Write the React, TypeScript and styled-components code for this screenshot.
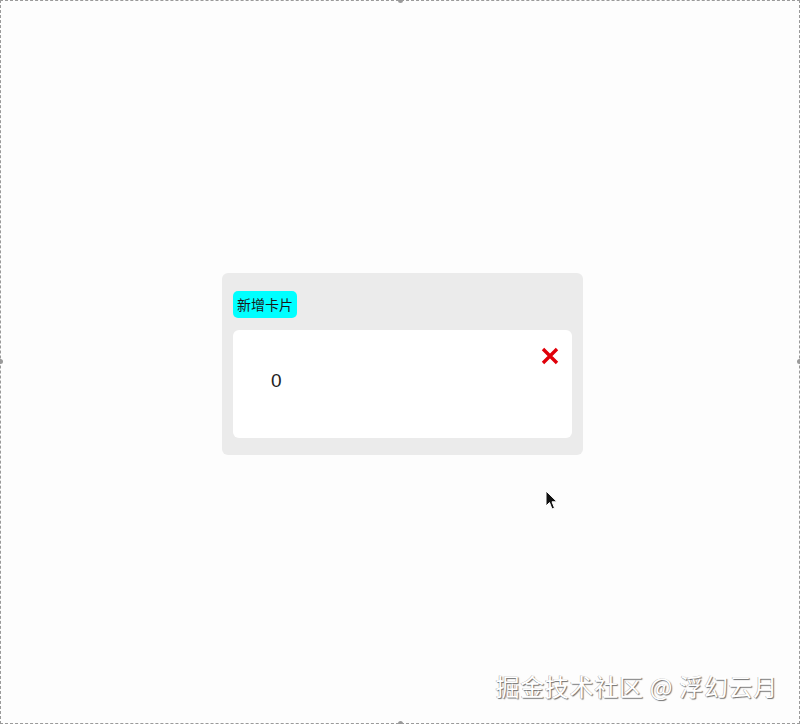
import styled, { createGlobalStyle } from "styled-components";

const GlobalStyle = createGlobalStyle`
  html, body {
    margin: 0;
    padding: 0;
    background: #fdfdfd;
  }
  * {
    box-sizing: border-box;
  }
`;

const Frame = styled.div`
  position: relative;
  width: 800px;
  height: 724px;
  border: 1px dashed #9a9a9a;
  display: flex;
  align-items: flex-start;
  justify-content: center;
  padding: 272px 0 0 5px;
  font-family: "Noto Sans CJK SC", "Liberation Sans", sans-serif;
`;

const Handle = styled.span<{ $x: string; $y: string }>`
  position: absolute;
  left: ${(p) => p.$x};
  top: ${(p) => p.$y};
  width: 5px;
  height: 5px;
  margin: -3px 0 0 -3px;
  border-radius: 50%;
  background: #9a9a9a;
`;

const Panel = styled.div`
  width: 361px;
  background: #ebebeb;
  border-radius: 6px;
  padding: 18px 11px 17px 11px;
  display: flex;
  flex-direction: column;
  gap: 12px;
`;

const AddButton = styled.button`
  align-self: flex-start;
  height: 27px;
  padding: 0 4px;
  border: none;
  border-radius: 5px;
  background: #00ffff;
  color: #1a1a1a;
  font-family: "Noto Sans CJK SC", "Liberation Sans", sans-serif;
  font-size: 14px;
  line-height: 27px;
  cursor: pointer;
`;

const Card = styled.div`
  position: relative;
  height: 108px;
  background: #ffffff;
  border-radius: 6px;
  padding: 38px 0 0 38px;
`;

const Count = styled.span`
  font-family: "Liberation Sans", sans-serif;
  font-size: 19px;
  color: #222;
`;

const Close = styled.button`
  position: absolute;
  top: 16px;
  right: 12px;
  width: 20px;
  height: 20px;
  padding: 0;
  border: none;
  background: transparent;
  cursor: pointer;
  display: flex;
`;

const Watermark = styled.div`
  position: absolute;
  right: 21px;
  bottom: 20px;
  font-family: "Noto Sans CJK SC", sans-serif;
  font-size: 24px;
  letter-spacing: 0.7px;
  color: #ffffff;
  text-shadow: 1px 1px 1px #6e6e6e, -0.5px -0.5px 0 #a8a8a8;
`;

const Pointer = styled.svg`
  position: absolute;
  left: 544px;
  top: 489px;
`;

export default function App() {
  return (
    <>
      <GlobalStyle />
      <Frame>
        <Handle $x="400px" $y="0px" />
        <Handle $x="0px" $y="361px" />
        <Handle $x="799px" $y="361px" />
        <Handle $x="400px" $y="723px" />
        <Panel>
          <AddButton>新增卡片</AddButton>
          <Card>
            <Count>0</Count>
            <Close aria-label="close">
              <svg width="20" height="20" viewBox="0 0 20 20">
                <path
                  d="M3 3 L17 17 M17 3 L3 17"
                  stroke="#e0000a"
                  strokeWidth="3.4"
                  strokeLinecap="butt"
                />
              </svg>
            </Close>
          </Card>
        </Panel>
        <Pointer width="14" height="22" viewBox="0 0 14 22">
          <path
            d="M1 1 L1 16 L4.5 12.5 L7 19 L9.5 18 L7 11.8 L12 11.8 Z"
            fill="#111"
            stroke="#fff"
            strokeWidth="1"
          />
        </Pointer>
        <Watermark>掘金技术社区 @ 浮幻云月</Watermark>
      </Frame>
    </>
  );
}
